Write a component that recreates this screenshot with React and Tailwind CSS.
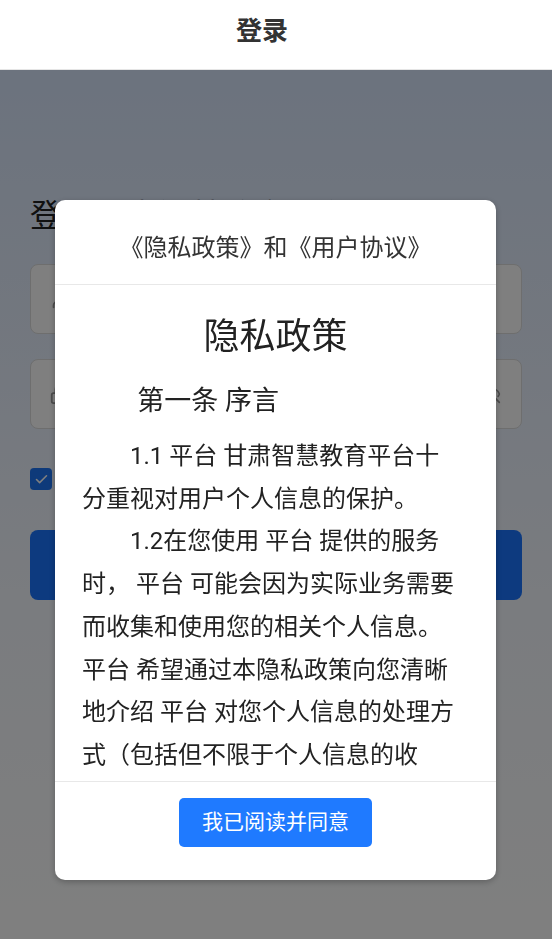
import { User, Lock, EyeOff, Check } from 'lucide-react';

const FONT = { fontFamily: 'Roboto, "Noto Sans CJK SC", sans-serif' };

function LoginPage() {
  return (
    <div className="bg-gradient-to-b from-[#d8e6fc] via-[#f4f8ff] via-60% to-white pt-[126px] px-[30px] h-[869px]">
      <h1 className="text-[32px] leading-[1.3] text-[#222] h-[50px]">登录甘肃智慧教育平台</h1>
      <div className="mt-[18px] h-[70px] rounded-lg border border-[#dcdcdc] bg-white flex items-center px-[18px]">
        <User size={22} className="text-[#999]" />
        <span className="ml-3 text-[18px] text-[#bbb]">请输入账号</span>
      </div>
      <div className="mt-[25px] h-[70px] rounded-lg border border-[#dcdcdc] bg-white flex items-center px-[18px]">
        <Lock size={22} className="text-[#999]" />
        <span className="ml-3 text-[18px] text-[#bbb] flex-1">请输入密码</span>
        <EyeOff size={20} className="text-[#999] mr-[2px]" />
      </div>
      <div className="mt-[38px] flex items-center gap-2">
        <span className="w-[22px] h-[22px] rounded bg-[#1d74f5] flex items-center justify-center">
          <Check size={15} strokeWidth={2.5} className="text-white" />
        </span>
        <span className="text-[16px] text-[#666]">我已阅读并同意《隐私政策》和《用户协议》</span>
      </div>
      <button className="mt-[39px] w-full h-[70px] rounded-lg bg-[#1a74ff] text-white text-[22px]">登录</button>
    </div>
  );
}

function PolicyModal() {
  return (
    <div className="fixed left-0 right-0 top-[70px] bottom-0 bg-black/50 pt-[130px] px-[55px]">
      <div className="w-[441px] h-[680px] bg-white rounded-[10px] shadow-[0_2px_6px_rgba(0,0,0,0.25)] flex flex-col overflow-hidden">
        <div className="h-[85px] flex items-center justify-center pt-[12px] border-b border-[#e8e8e8] text-[24px] text-[#333]">
          《隐私政策》和《用户协议》
        </div>
        <div className="h-[496px] overflow-hidden pl-[27px] pr-[34px] text-[#222]">
          <h2 className="mt-[25px] text-center text-[36px] leading-[54px] -mr-[7px]">隐私政策</h2>
          <h3 className="mt-[16px] text-[27px] leading-[43px] indent-[2.05em]">第一条 序言</h3>
          <div className="mt-[12px] text-[24px] leading-[42.7px]">
            <p className="indent-[2em]">1.1 平台 甘肃智慧教育平台十分重视对用户个人信息的保护。</p>
            <p className="indent-[2em]">
              1.2在您使用 平台 提供的服务时， 平台 可能会因为实际业务需要而收集和使用您的相关个人信息。平台 希望通过本隐私政策向您清晰地介绍 平台 对您个人信息的处理方式（包括但不限于个人信息的收集、使用、存储、共享、转让和公开披露等），以及您享有的权利。
            </p>
          </div>
        </div>
        <div className="flex-1 border-t border-[#e8e8e8] flex justify-center pt-[16px]">
          <button className="h-[49px] px-[23px] rounded-[5px] bg-[#1f7aff] text-white text-[21px]">我已阅读并同意</button>
        </div>
      </div>
    </div>
  );
}

export default function App() {
  return (
    <div style={FONT} className="relative w-[552px] h-[939px] overflow-hidden bg-white">
      <header className="h-[70px] bg-white border-b border-[#e5e5e5] flex justify-center pt-[12px] pr-[28px] relative z-10">
        <span className="text-[26px] leading-[38px] font-semibold text-[#333]">登录</span>
      </header>
      <LoginPage />
      <PolicyModal />
    </div>
  );
}
